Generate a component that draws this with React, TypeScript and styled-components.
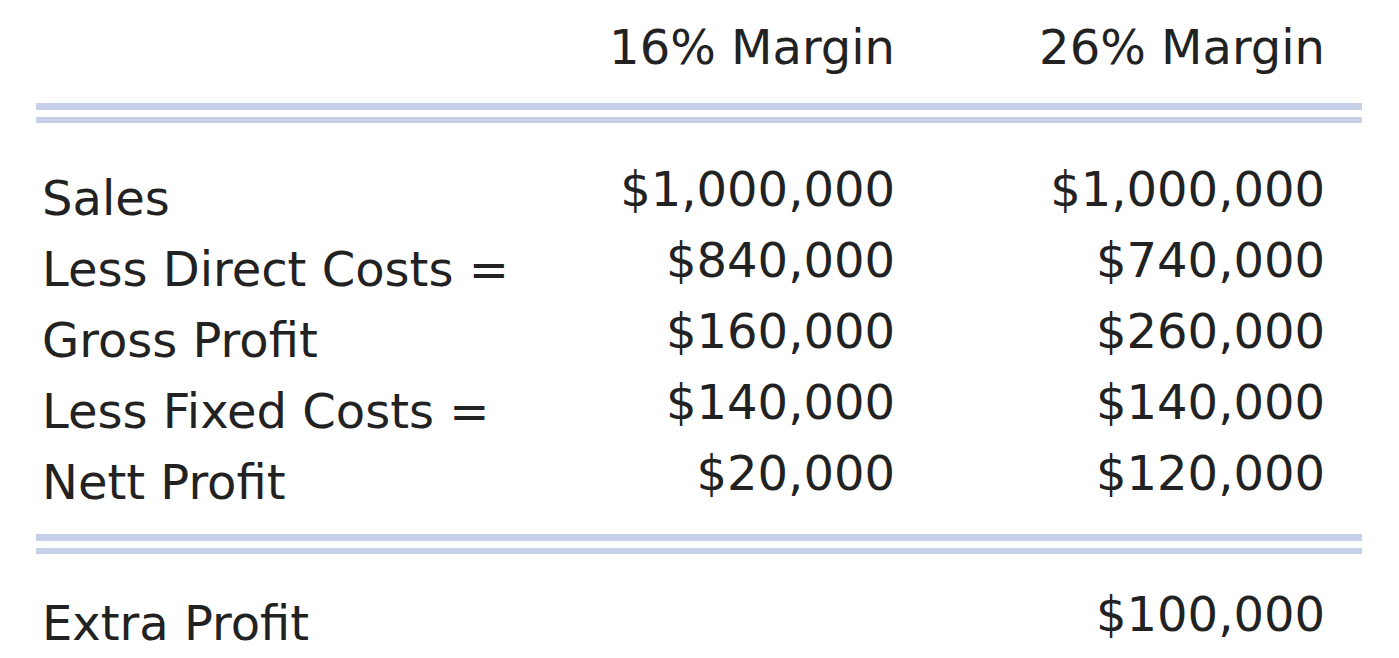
import React from "react";
import styled, { createGlobalStyle } from "styled-components";

const Global = createGlobalStyle`
  html, body { margin: 0; padding: 0; background: #ffffff; }
  body { overflow: hidden; }
`;

const Page = styled.div`
  box-sizing: border-box;
  width: 1399px;
  height: 658px;
  padding: 12px 37px 0 36px;
  font-family: "DejaVu Sans", "Liberation Sans", sans-serif;
  font-size: 48px;
  line-height: 71px;
  color: #222222;
`;

const Grid = styled.div<{ $mt?: number }>`
  display: grid;
  grid-template-columns: minmax(0, 1fr) 430px 430px;
  margin-top: ${(p) => p.$mt ?? 0}px;
  padding-right: 37px;
`;

const Label = styled.div`
  padding-left: 6px;
  white-space: nowrap;
`;

const Value = styled.div<{ $lift?: number }>`
  text-align: right;
  white-space: nowrap;
  margin-top: ${(p) => -(p.$lift ?? 0)}px;
`;

const DoubleRule = styled.div<{ $mt: number }>`
  margin-top: ${(p) => p.$mt}px;
  height: 7px;
  border-top: 7px solid #c6d0e9;
  border-bottom: 6px solid #c6d0e9;
`;

const rows: [string, string, string][] = [
  ["Sales", "$1,000,000", "$1,000,000"],
  ["Less Direct Costs =", "$840,000", "$740,000"],
  ["Gross Profit", "$160,000", "$260,000"],
  ["Less Fixed Costs =", "$140,000", "$140,000"],
  ["Nett Profit", "$20,000", "$120,000"],
];

export default function App() {
  return (
    <>
      <Global />
      <Page>
        <Grid>
          <Label />
          <Value>16% Margin</Value>
          <Value>26% Margin</Value>
        </Grid>
        <DoubleRule $mt={20} />
        <Grid $mt={40}>
          {rows.map(([l, a, b]) => (
            <React.Fragment key={l}>
              <Label>{l}</Label>
              <Value $lift={9}>{a}</Value>
              <Value $lift={9}>{b}</Value>
            </React.Fragment>
          ))}
        </Grid>
        <DoubleRule $mt={16} />
        <Grid $mt={34}>
          <Label>Extra Profit</Label>
          <Value $lift={9} />
          <Value $lift={9}>$100,000</Value>
        </Grid>
      </Page>
    </>
  );
}
